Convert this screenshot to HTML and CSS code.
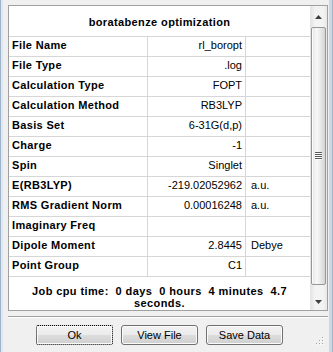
FILE: index.html
```html
<!DOCTYPE html>
<html>
<head>
<meta charset="utf-8">
<link rel="stylesheet" href="styles.css">
</head>
<body>
<div class="window">
  <div class="panel">
    <div class="content">
      <div class="title">boratabenze optimization</div>
      <div class="row"><div class="lbl">File Name</div><div class="val">rl_boropt</div><div class="unit"></div></div>
      <div class="row"><div class="lbl">File Type</div><div class="val">.log</div><div class="unit"></div></div>
      <div class="row"><div class="lbl">Calculation Type</div><div class="val">FOPT</div><div class="unit"></div></div>
      <div class="row"><div class="lbl">Calculation Method</div><div class="val">RB3LYP</div><div class="unit"></div></div>
      <div class="row"><div class="lbl">Basis Set</div><div class="val">6-31G(d,p)</div><div class="unit"></div></div>
      <div class="row"><div class="lbl">Charge</div><div class="val">-1</div><div class="unit"></div></div>
      <div class="row"><div class="lbl">Spin</div><div class="val">Singlet</div><div class="unit"></div></div>
      <div class="row"><div class="lbl">E(RB3LYP)</div><div class="val">-219.02052962</div><div class="unit">a.u.</div></div>
      <div class="row"><div class="lbl">RMS Gradient Norm</div><div class="val">0.00016248</div><div class="unit">a.u.</div></div>
      <div class="row"><div class="lbl">Imaginary Freq</div><div class="val"></div><div class="unit"></div></div>
      <div class="row"><div class="lbl">Dipole Moment</div><div class="val">2.8445</div><div class="unit">Debye</div></div>
      <div class="row"><div class="lbl">Point Group</div><div class="val">C1</div><div class="unit"></div></div>
      <div class="footer">Job cpu time:  0 days  0 hours  4 minutes  4.7<br>seconds.</div>
    </div>
    <div class="scrollbar">
      <div class="sb-up"><svg width="7" height="4" viewBox="0 0 7 4"><path d="M0 4 L3.5 0 L7 4 Z" fill="#404040"/></svg></div>
      <div class="thumb"><svg width="7" height="8" viewBox="0 0 7 8"><path d="M0 0.5H7M0 2.5H7M0 4.5H7M0 6.5H7" stroke="#5a5a5a" stroke-width="1"/><path d="M0 1.5H7M0 3.5H7M0 5.5H7M0 7.5H7" stroke="#ffffff" stroke-width="1" opacity=".8"/></svg></div>
      <div class="sb-down"><svg width="7" height="4" viewBox="0 0 7 4"><path d="M0 0 L3.5 4 L7 0 Z" fill="#404040"/></svg></div>
    </div>
  </div>
  <div class="sep"></div>
  <div class="buttons">
    <button class="btn btn-default">Ok</button>
    <button class="btn">View File</button>
    <button class="btn">Save Data</button>
    <svg class="grip" width="8" height="8" viewBox="0 0 8 8">
      <rect x="6" y="0" width="1" height="1" fill="#a8a8a8"/>
      <rect x="6" y="3" width="1" height="1" fill="#a8a8a8"/>
      <rect x="3" y="3" width="1" height="1" fill="#a8a8a8"/>
      <rect x="6" y="6" width="1" height="1" fill="#a8a8a8"/>
      <rect x="3" y="6" width="1" height="1" fill="#a8a8a8"/>
      <rect x="0" y="6" width="1" height="1" fill="#a8a8a8"/>
      <rect x="7" y="1" width="1" height="1" fill="#fff"/>
      <rect x="7" y="4" width="1" height="1" fill="#fff"/>
      <rect x="4" y="4" width="1" height="1" fill="#fff"/>
      <rect x="7" y="7" width="1" height="1" fill="#fff"/>
      <rect x="4" y="7" width="1" height="1" fill="#fff"/>
      <rect x="1" y="7" width="1" height="1" fill="#fff"/>
    </svg>
  </div>
</div>
</body>
</html>
```

FILE: styles.css
```css
html, body {
  margin: 0;
  padding: 0;
  background: #f0f0f0;
}

body {
  width: 333px;
  height: 352px;
  overflow: hidden;
  font-family: "Liberation Sans", Arial, sans-serif;
  font-size: 11px;
  color: #000;
}

.window {
  box-sizing: border-box;
  width: 333px;
  height: 352px;
  padding: 5px 5px 0 8px;
  display: flex;
  flex-direction: column;
  background: #f0f0f0;
  box-shadow: inset 1px 0 #9fb3c9, inset 3px 0 #dfe7f0, inset -1px 0 #a4b6ca, inset -4px 0 #c9d6e4;
}

.panel {
  box-sizing: border-box;
  width: 320px;
  height: 306px;
  border: 1px solid #a0a0a0;
  background: #fff;
  display: flex;
  flex-shrink: 0;
}

.content {
  width: 301px;
  display: flex;
  flex-direction: column;
}

.title {
  box-sizing: border-box;
  height: 31px;
  padding-top: 9px;
  line-height: 14px;
  text-align: center;
  font-weight: bold;
  letter-spacing: 0.38px;
  border-bottom: 1px solid #d6d6d6;
}

.row {
  display: grid;
  grid-template-columns: 139px 98px 64px;
  height: 20px;
}

.row > div {
  box-sizing: border-box;
  height: 20px;
  line-height: 17px;
  padding-bottom: 2px;
  border-bottom: 1px solid #d6d6d6;
  white-space: nowrap;
  overflow: hidden;
}

.lbl {
  padding-left: 3px;
  font-weight: bold;
  letter-spacing: 0.33px;
  border-right: 1px solid #d6d6d6;
}

.val {
  text-align: right;
  padding-right: 3px;
  border-right: 1px solid #d6d6d6;
}

.unit {
  padding-left: 5px;
}

.footer {
  flex: 1;
  padding-top: 8px;
  line-height: 12px;
  text-align: center;
  font-weight: bold;
  letter-spacing: 0.4px;
  white-space: pre;
}

.scrollbar {
  width: 17px;
  display: flex;
  flex-direction: column;
  background: linear-gradient(to right, #e2e2e2, #f3f3f3 30%, #f3f3f3 75%, #e9e9e9);
}

.sb-up {
  height: 21px;
  display: flex;
  align-items: center;
  justify-content: center;
  padding-top: 1px;
  box-sizing: border-box;
}

.thumb {
  box-sizing: border-box;
  height: 258px;
  margin: 0 1px;
  border: 1px solid #979797;
  border-radius: 2px;
  background: linear-gradient(to right, #e4e4e4, #f7f7f7 35%, #ececec 60%, #d4d4d4);
  box-shadow: inset 1px 0 #fdfdfd;
  display: flex;
  align-items: center;
  justify-content: center;
}

.sb-down {
  flex: 1;
  display: flex;
  align-items: center;
  justify-content: center;
  padding-top: 8px;
  box-sizing: border-box;
}

.sep {
  width: 320px;
  margin-top: 5px;
  border-top: 1px solid #a0a0a0;
  border-bottom: 1px solid #fff;
  flex-shrink: 0;
}

.buttons {
  margin-top: 7px;
  padding-left: 28px;
  display: flex;
  gap: 8px;
  align-items: flex-start;
}

.btn {
  box-sizing: border-box;
  width: 77px;
  height: 20px;
  margin: 0;
  padding: 0;
  border: 1px solid #707070;
  border-radius: 3px;
  background: linear-gradient(#f2f2f2 0%, #ebebeb 50%, #dddddd 50%, #cfcfcf 100%);
  box-shadow: inset 0 0 0 1px #fbfbfb;
  font-family: "Liberation Sans", Arial, sans-serif;
  font-size: 11px;
  color: #000;
  line-height: 17px;
}

.btn-default {
  border: 1px dotted #000;
  border-radius: 2px;
}

.grip {
  margin-left: auto;
  margin-right: 4px;
  align-self: flex-end;
  margin-bottom: 0;
}
```
